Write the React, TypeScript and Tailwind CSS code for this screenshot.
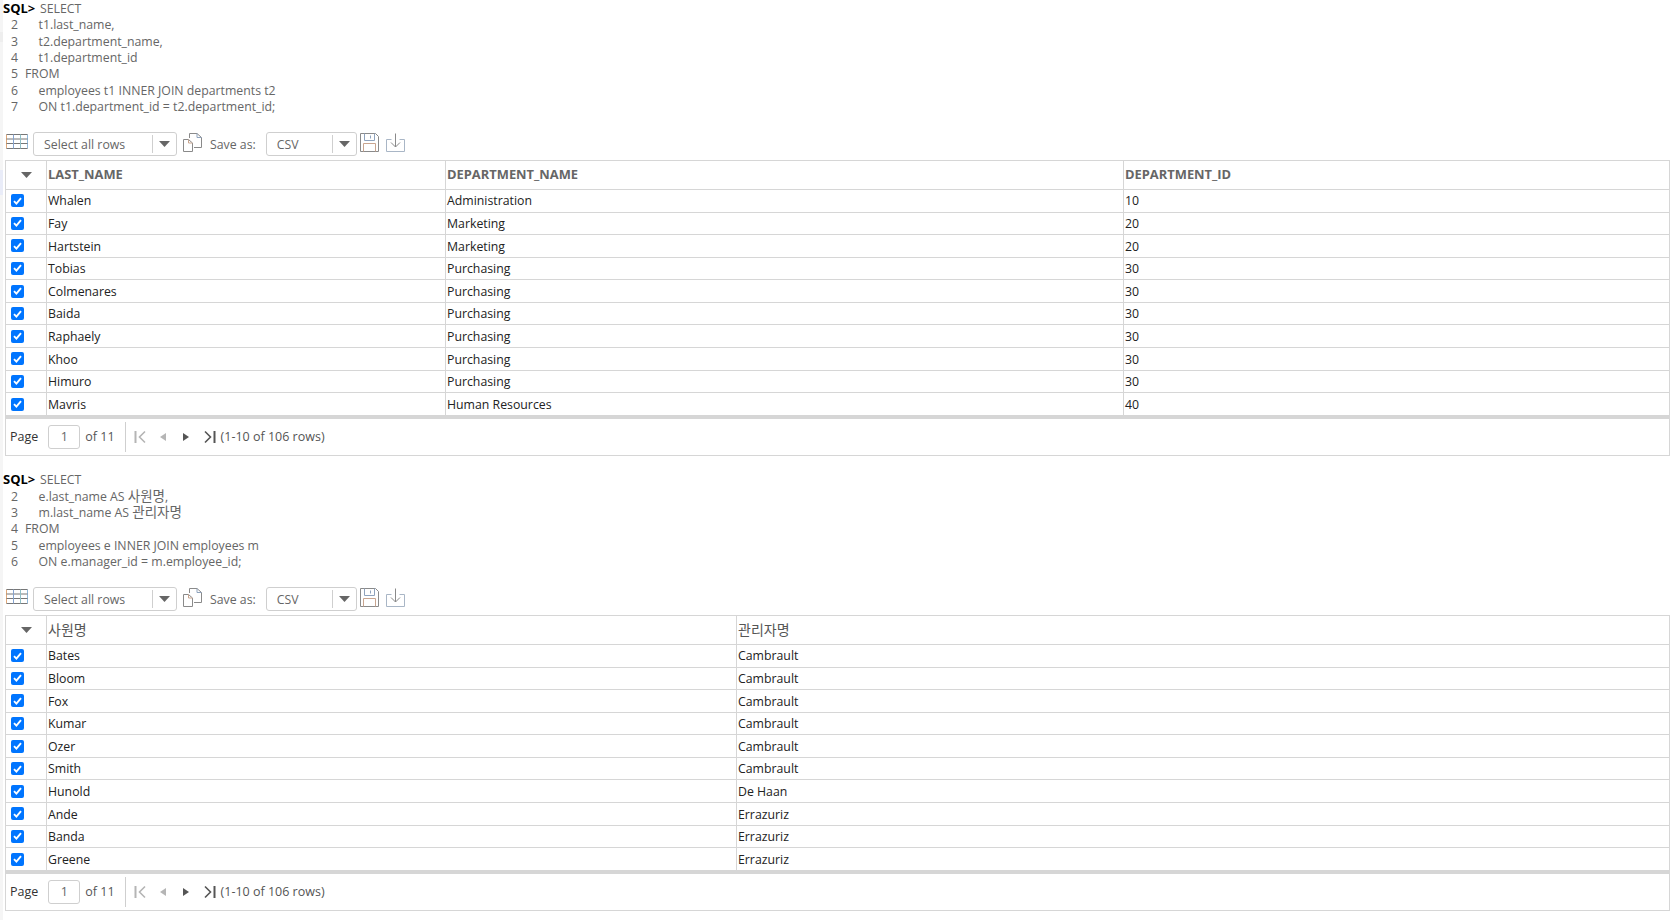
import type { ReactNode } from 'react';

function TableIcon() {
  return (
    <svg width="22" height="15" viewBox="0 0 22 15" fill="none" className="shrink-0">
      <path d="M0.5 0.5V14.5" stroke="#e0a878" />
      <path d="M21.5 0.5V14.5" stroke="#8fb8dc" />
      <path d="M0.5 0.5H21.5M0.5 5H21.5M0.5 9.5H21.5M0.5 14.5H21.5" stroke="#777" />
      <path d="M7.5 0.5V14.5" stroke="#86a3cf" />
      <path d="M14.5 0.5V14.5" stroke="#8fc0c8" />
    </svg>
  );
}

function CopyIcon() {
  return (
    <svg width="20" height="20" viewBox="0 0 20 20" fill="none" className="shrink-0">
      <path d="M0.5 6.5H5.5L9.5 10V18.5H0.5Z" stroke="#8a8a8a" />
      <path d="M5.5 6.5V10H9.5" stroke="#c9a58f" />
      <path d="M6.5 5V0.5H14L18.5 4.5V14.5H11" stroke="#8a8a8a" />
      <path d="M14 0.5V4.5H18.5" stroke="#8fa3bd" />
    </svg>
  );
}

function SaveIcon() {
  return (
    <svg width="19" height="20" viewBox="0 0 19 20" fill="none" className="shrink-0">
      <path d="M0.5 0.5H15.5L18.5 3.5V18.5H0.5Z" stroke="#8a8a8a" />
      <path d="M3.5 10.5H15.5V18.5M3.5 10.5V18.5" stroke="#c9a58f" />
      <path d="M4.5 0.5V7.5H14.5V0.5M10.5 2.5V5.5" stroke="#8fa3bd" />
    </svg>
  );
}

function DownloadIcon() {
  return (
    <svg width="19" height="20" viewBox="0 0 19 20" fill="none" className="shrink-0">
      <path d="M5.5 6.5H0.5V18.5H18.5V6.5H13.5" stroke="#a9b6c6" />
      <path d="M9.5 0.5V14M5 9.5L9.5 14L14 9.5" stroke="#8a8a8a" />
    </svg>
  );
}

function Caret() {
  return (
    <svg width="11" height="6" viewBox="0 0 11 6" className="shrink-0">
      <path d="M0 0H11L5.5 6Z" fill="#666" />
    </svg>
  );
}

function Dropdown({ label, width, split }: { label: string; width: string; split: string }) {
  return (
    <div className={`flex h-[24px] items-center rounded-[3px] border border-[#cfcfcf] bg-white ${width}`}>
      <span className={`pl-[10px] pt-[2px] text-[#666] ${split}`}>{label}</span>
      <span className="h-[18px] w-px bg-[#cfcfcf]" />
      <span className="flex flex-1 justify-center"><Caret /></span>
    </div>
  );
}

function Toolbar() {
  return (
    <div className="flex h-[24px] items-center pl-[3px]">
      <div className="-mt-[5px]"><TableIcon /></div>
      <div className="ml-[5px]"><Dropdown label="Select all rows" width="w-[144px]" split="w-[118px]" /></div>
      <div className="ml-[6px] -mt-[2px]"><CopyIcon /></div>
      <span className="ml-[7px] pt-[2px] text-[#666]">Save as:</span>
      <div className="ml-[10px]"><Dropdown label="CSV" width="w-[91px]" split="w-[65px]" /></div>
      <div className="ml-[3px] -mt-[2px]"><SaveIcon /></div>
      <div className="ml-[7px] -mt-[2px]"><DownloadIcon /></div>
    </div>
  );
}

function Check() {
  return (
    <span className="flex h-[13px] w-[13px] items-center justify-center rounded-[2px] bg-[#0075ff]">
      <svg width="9" height="8" viewBox="0 0 9 8" fill="none">
        <path d="M1 4.2L3.4 6.6L8 1.2" stroke="white" strokeWidth="1.9" />
      </svg>
    </span>
  );
}

function Sql({ lines }: { lines: ReactNode[] }) {
  return (
    <div className="leading-[16.35px] text-[#666]">
      {lines.map((l, i) => <div key={i} className="whitespace-pre">{l}</div>)}
    </div>
  );
}

function Line({ n, indent, children }: { n: number; indent?: boolean; children: ReactNode }) {
  return (
    <div className="flex">
      <span className="ml-[8px] w-[14px]">{n}</span>
      <span className={indent ? 'pl-[13.5px]' : ''}>{children}</span>
    </div>
  );
}

function Grid({ cols, headers, bold, rows }: { cols: string[]; headers: string[]; bold?: boolean; rows: string[][] }) {
  return (
    <div className="ml-[2px] border border-[#d6d6d6] bg-white">
      <div className="flex h-[29px] border-b border-[#d6d6d6]">
        <div className="flex w-[41px] shrink-0 items-center justify-center border-r border-[#d6d6d6]"><Caret /></div>
        {headers.map((h, i) => (
          <div key={h} className={`flex items-center border-r border-[#d6d6d6] pl-[1px] last:border-r-0 ${cols[i]} ${bold ? 'text-[12.9px] font-bold text-[#666]' : 'text-[14px] text-[#555]'}`}>{h}</div>
        ))}
      </div>
      {rows.map((r, i) => (
        <div key={r[0] + i} className="flex h-[22.6px] border-b border-[#d6d6d6] last:border-b-0">
          <div className="flex w-[41px] shrink-0 items-center border-r border-[#d6d6d6] pl-[5px]"><Check /></div>
          {r.map((c, j) => (
            <div key={j} className={`flex items-center border-r border-[#d6d6d6] pl-[1px] pt-[2px] text-[#222] last:border-r-0 ${cols[j]}`}>{c}</div>
          ))}
        </div>
      ))}
      <div className="flex h-[39px] items-center border-t-[3px] border-[#d6d6d6] pl-[4px] text-[12.5px]">
        <span className="pt-[1px] text-[#333]">Page</span>
        <span className="ml-[10px] flex h-[24px] w-[32px] items-center justify-center rounded-[3px] border border-[#cfcfcf] pt-[2px] text-[#666]">1</span>
        <span className="ml-[5px] pt-[1px] text-[#555]">of 11</span>
        <span className="ml-[10px] h-[30px] w-px bg-[#cfcfcf]" />
        <svg width="86" height="14" viewBox="0 0 86 14" className="ml-[8px] shrink-0" fill="none">
          <path d="M1.5 1V13" stroke="#b5b5b5" strokeWidth="2" />
          <path d="M11 1.5L5.5 7L11 12.5" stroke="#b5b5b5" strokeWidth="1.6" />
          <path d="M32 3V11L26 7Z" fill="#b5b5b5" />
          <path d="M49 3V11L55 7Z" fill="#555" />
          <path d="M71 1.5L76.5 7L71 12.5" stroke="#555" strokeWidth="1.6" />
          <path d="M80.5 1V13" stroke="#555" strokeWidth="2" />
        </svg>
        <span className="ml-[1px] pt-[1px] text-[#555]">(1-10 of 106 rows)</span>
      </div>
    </div>
  );
}

const rowsA = [
  ['Whalen', 'Administration', '10'],
  ['Fay', 'Marketing', '20'],
  ['Hartstein', 'Marketing', '20'],
  ['Tobias', 'Purchasing', '30'],
  ['Colmenares', 'Purchasing', '30'],
  ['Baida', 'Purchasing', '30'],
  ['Raphaely', 'Purchasing', '30'],
  ['Khoo', 'Purchasing', '30'],
  ['Himuro', 'Purchasing', '30'],
  ['Mavris', 'Human Resources', '40'],
];

const rowsB = [
  ['Bates', 'Cambrault'],
  ['Bloom', 'Cambrault'],
  ['Fox', 'Cambrault'],
  ['Kumar', 'Cambrault'],
  ['Ozer', 'Cambrault'],
  ['Smith', 'Cambrault'],
  ['Hunold', 'De Haan'],
  ['Ande', 'Errazuriz'],
  ['Banda', 'Errazuriz'],
  ['Greene', 'Errazuriz'],
];

const Prompt = () => (
  <span>
    <span className="text-[13px] font-bold text-black">SQL&gt;</span> <span className="ml-[1.5px]">SELECT</span>
  </span>
);

const Ko = ({ children }: { children: ReactNode }) => <span className="text-[13.5px] leading-none">{children}</span>;

export default function App() {
  return (
    <div className="flex h-[920px] w-[1670px] overflow-hidden bg-white font-['Open_Sans','Noto_Sans_CJK_KR',sans-serif] text-[12.3px]">
      <div className="flex w-[3px] shrink-0 flex-col bg-[#f5f5f5]">
        <div className="mt-[32px] h-[10px] bg-[#eeeeee]" />
        <div className="mt-[128px] h-[25px] bg-[#e9ecf8]" />
      </div>
      <div className="min-w-0 flex-1">
        <Sql lines={[
          <Prompt key="a" />,
          <Line key="2" n={2} indent>t1.last_name,</Line>,
          <Line key="3" n={3} indent>t2.department_name,</Line>,
          <Line key="4" n={4} indent>t1.department_id</Line>,
          <Line key="5" n={5}>FROM</Line>,
          <Line key="6" n={6} indent>employees t1 INNER JOIN departments t2</Line>,
          <Line key="7" n={7} indent>ON t1.department_id = t2.department_id;</Line>,
        ]} />
        <div className="mt-[16.5px]"><Toolbar /></div>
        <div className="mt-[4px]">
          <Grid bold cols={['w-[399px]', 'w-[678px]', 'flex-1']} headers={['LAST_NAME', 'DEPARTMENT_NAME', 'DEPARTMENT_ID']} rows={rowsA} />
        </div>
        <div className="mt-[15.5px]">
          <Sql lines={[
            <Prompt key="a" />,
            <Line key="2" n={2} indent>e.last_name AS <Ko>사원명</Ko>,</Line>,
            <Line key="3" n={3} indent>m.last_name AS <Ko>관리자명</Ko></Line>,
            <Line key="4" n={4}>FROM</Line>,
            <Line key="5" n={5} indent>employees e INNER JOIN employees m</Line>,
            <Line key="6" n={6} indent>ON e.manager_id = m.employee_id;</Line>,
          ]} />
        </div>
        <div className="mt-[16.5px]"><Toolbar /></div>
        <div className="mt-[4px]">
          <Grid cols={['w-[690px]', 'flex-1']} headers={['사원명', '관리자명']} rows={rowsB} />
        </div>
      </div>
    </div>
  );
}
